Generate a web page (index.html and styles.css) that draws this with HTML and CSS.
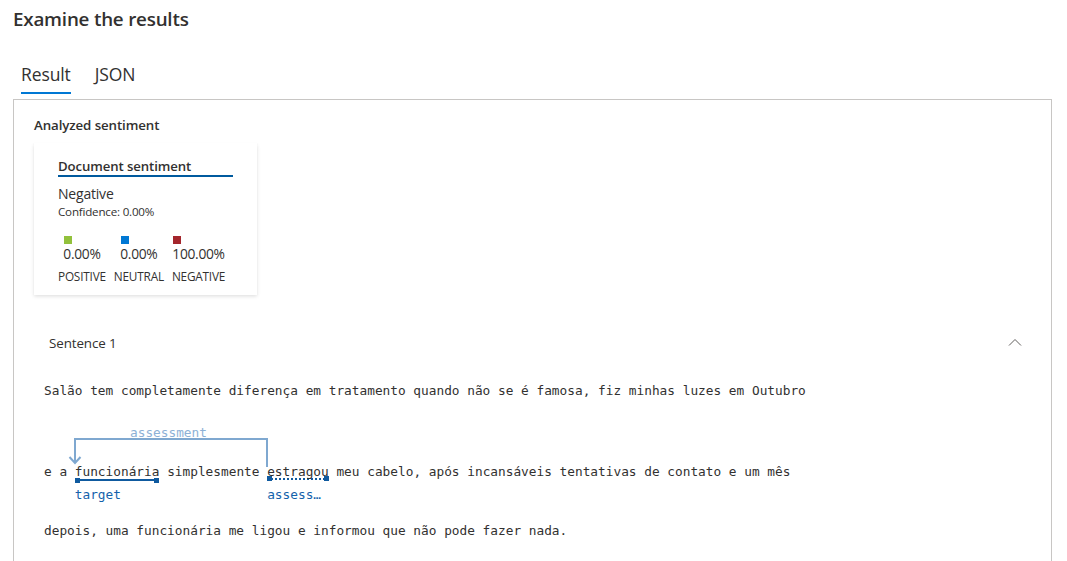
FILE: index.html
```html
<!DOCTYPE html>
<html lang="en">
<head>
<meta charset="utf-8">
<title>Examine the results</title>
<link rel="stylesheet" href="styles.css">
</head>
<body>
<div class="page">
  <h1 class="title">Examine the results</h1>
  <div class="tabs">
    <div class="tab active">Result</div>
    <div class="tab">JSON</div>
  </div>
  <div class="panel">
    <div class="section-label">Analyzed sentiment</div>
    <div class="card">
      <div class="card-title">Document sentiment</div>
      <div class="main-label">Negative</div>
      <div class="confidence">Confidence: 0.00%</div>
      <div class="scores">
        <div class="score">
          <div class="score-top"><span class="sw pos"></span><span class="pct">0.00%</span></div>
          <span class="name">POSITIVE</span>
        </div>
        <div class="score">
          <div class="score-top"><span class="sw neu"></span><span class="pct">0.00%</span></div>
          <span class="name">NEUTRAL</span>
        </div>
        <div class="score">
          <div class="score-top"><span class="sw neg"></span><span class="pct">100.00%</span></div>
          <span class="name">NEGATIVE</span>
        </div>
      </div>
    </div>
    <div class="sentence-head">
      <span>Sentence 1</span>
      <svg class="chev" width="14" height="8" viewBox="0 0 14 8"><path d="M1 7.5 L7 1.5 L13 7.5" fill="none" stroke="#605e5c" stroke-width="1"/></svg>
    </div>
    <div class="mono">
      <div class="line">Salão tem completamente diferença em tratamento quando não se é famosa, fiz minhas luzes em Outubro</div>
      <div class="annotated">
        <svg class="bracket" width="300" height="50" viewBox="0 0 300 50">
          <path d="M31 43 L31 19 L223 19 L223 47" fill="none" stroke="#7fa8d0" stroke-width="2"/>
          <path d="M25.5 37 L31 43 L36.5 37" fill="none" stroke="#7fa8d0" stroke-width="2"/>
        </svg>
        <span class="bracket-label">assessment</span>
        <div class="line">e a <span class="word target">funcionária<span class="ann">target</span></span> simplesmente <span class="word assess">estragou<span class="ann">assess…</span></span> meu cabelo, após incansáveis tentativas de contato e um mês</div>
      </div>
      <div class="line last">depois, uma funcionária me ligou e informou que não pode fazer nada.</div>
    </div>
  </div>
</div>
</body>
</html>
```
FILE: styles.css
```css
* { box-sizing: border-box; }
body {
  margin: 0;
  background: #fff;
  color: #323130;
  font-family: "Open Sans", "Noto Sans", sans-serif;
}
.page { padding: 7px 0 0 0; }
.title {
  margin: 0 0 0 13px;
  font-size: 18.8px;
  line-height: 24px;
  font-weight: 600;
  letter-spacing: -0.2px;
}
.tabs {
  display: flex;
  gap: 24px;
  margin: 32px 0 0 21px;
}
.tab {
  font-size: 17.5px;
  line-height: 22px;
  padding-bottom: 7px;
  border-bottom: 2px solid transparent;
  letter-spacing: -0.1px;
}
.tab.active {
  border-bottom-color: #0078d4;
}
.panel {
  margin: 5px 0 0 13px;
  width: 1039px;
  height: 480px;
  border: 1px solid #c8c6c4;
  border-bottom: none;
  padding: 16px 20px 0 20px;
}
.section-label {
  font-size: 13.3px;
  line-height: 18px;
  font-weight: 600;
  letter-spacing: -0.1px;
}
.card {
  margin-top: 9px;
  width: 223px;
  height: 152px;
  padding: 14px 24px 0 24px;
  background: #fff;
  box-shadow: 0 1.6px 3.6px rgba(0,0,0,0.13), 0 0.3px 0.9px rgba(0,0,0,0.11);
}
.card-title {
  width: 175px;
  font-size: 13.2px;
  line-height: 18px;
  font-weight: 600;
  border-bottom: 2px solid #005a9e;
  letter-spacing: -0.1px;
}
.main-label {
  margin-top: 7px;
  font-size: 14px;
  line-height: 20px;
  letter-spacing: -0.2px;
}
.confidence {
  margin-top: 1px;
  font-size: 11.6px;
  line-height: 14px;
  letter-spacing: -0.2px;
}
.scores {
  display: flex;
  gap: 8px;
  margin-top: 17px;
}
.score {
  display: flex;
  flex-direction: column;
  align-items: center;
}
.score-top {
  display: flex;
  flex-direction: column;
  align-items: flex-start;
}
.sw {
  display: block;
  width: 8px;
  height: 8px;
  margin-left: 1px;
}
.sw.pos { background: #92c13c; }
.sw.neu { background: #0078d4; }
.sw.neg { background: #a4262c; }
.pct {
  margin-top: 1px;
  font-size: 13.8px;
  line-height: 18px;
  letter-spacing: -0.3px;
}
.name {
  margin-top: 6px;
  font-size: 11.8px;
  line-height: 14px;
  letter-spacing: -0.2px;
}
.sentence-head {
  display: flex;
  justify-content: space-between;
  align-items: center;
  margin-top: 39px;
  padding: 0 9px 0 15px;
  font-size: 13.4px;
  line-height: 18px;
  letter-spacing: -0.1px;
}
.chev { display: block; margin-top: -2px; }
.mono {
  margin-top: 30px;
  padding-left: 10px;
  font-family: "DejaVu Sans Mono", "Liberation Mono", monospace;
  font-size: 12.79px;
  line-height: 18px;
  color: #323130;
}
.line { white-space: nowrap; }
.annotated {
  position: relative;
  margin-top: 21px;
  padding-top: 42px;
  padding-bottom: 22px;
}
.bracket {
  position: absolute;
  left: 0;
  top: -1px;
}
.bracket-label {
  position: absolute;
  left: 86px;
  top: 3px;
  line-height: 18px;
  color: #8db1d6;
}
.word { position: relative; }
.word::before, .word::after {
  content: "";
  position: absolute;
  bottom: -2px;
  width: 5px;
  height: 5px;
  background: #0f5a9f;
}
.word::before { left: 0; }
.word::after { right: 0; }
.word.target { border-bottom: 2px solid #0f5a9f; }
.word.assess {
  background-image: linear-gradient(to right, #0f5a9f 50%, transparent 50%);
  background-size: 4px 2px;
  background-repeat: repeat-x;
  background-position: 0 100%;
  padding-bottom: 1px;
}
.word.assess::before, .word.assess::after { bottom: -1px; }
.word.target::before, .word.target::after { bottom: -3.5px; }
.ann {
  position: absolute;
  left: 0;
  top: 22px;
  color: #1462ab;
  line-height: 18px;
}
.last { margin-top: 19px; }
```
